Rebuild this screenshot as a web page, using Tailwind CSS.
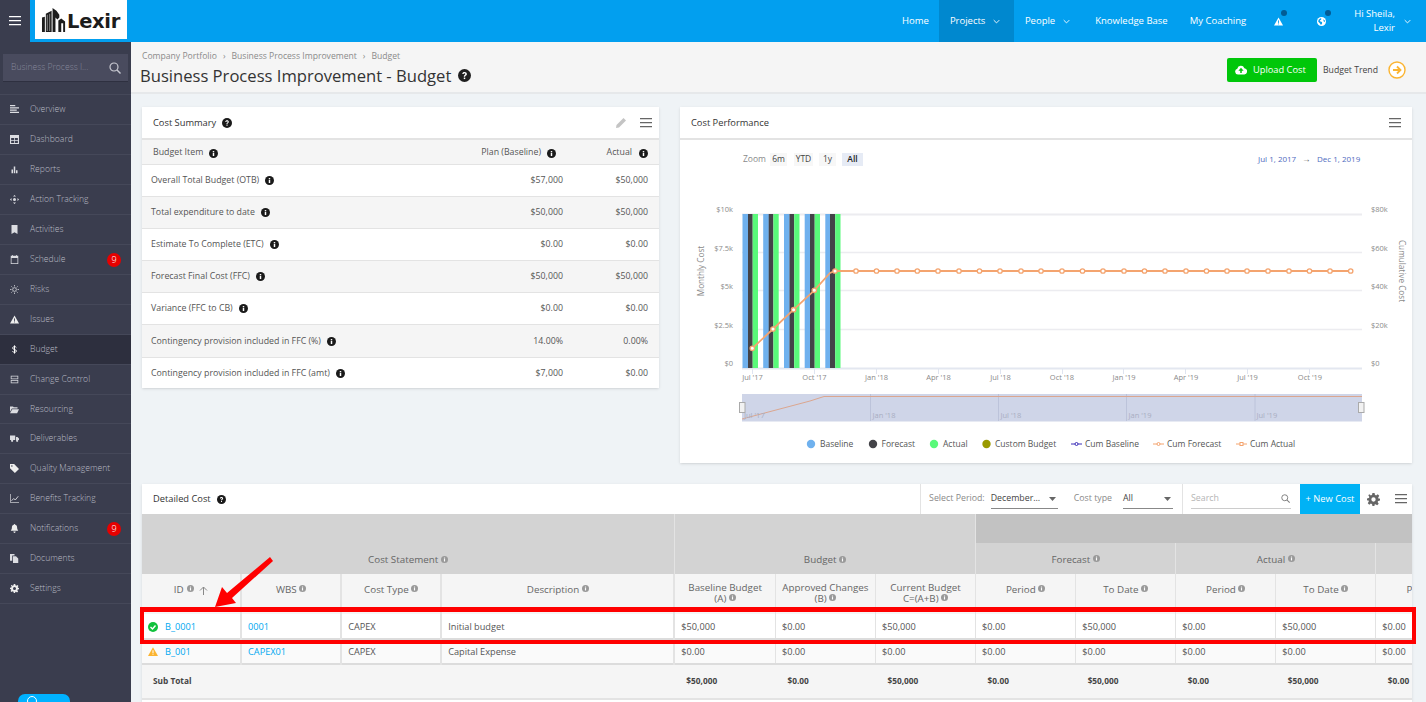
<!DOCTYPE html>
<html lang="en"><head><meta charset="utf-8"><title>Budget</title>
<script src="https://cdn.jsdelivr.net/npm/@tailwindcss/browser@4"></script></head>
<body class="relative w-[1426px] h-[702px] overflow-hidden bg-[#eff3f6] font-['Open_Sans',sans-serif] text-[#555] text-[8.800px]">
<svg class="hidden" xmlns="http://www.w3.org/2000/svg">
<symbol id="info" viewBox="0 0 16 16"><circle cx="8" cy="8" r="8" fill="currentColor"/><rect x="6.700" y="7" width="2.600" height="5.500" fill="#fff"/><rect x="6.700" y="3.600" width="2.600" height="2.300" fill="#fff"/></symbol>
<symbol id="help" viewBox="0 0 16 16"><circle cx="8" cy="8" r="8" fill="currentColor"/><path d="M5.200 6.200C5.300 4.400 6.600 3.600 8.100 3.600c1.600 0 2.800 1 2.800 2.400 0 1.200-.8 1.800-1.500 2.300-.5.4-.6.6-.6 1.200H7.100c0-1 .3-1.600 1-2.100.6-.4.9-.7.9-1.200 0-.5-.4-.9-1-.9-.7 0-1 .4-1.100 1z" fill="#fff"/><rect x="7.100" y="10.500" width="1.800" height="1.900" fill="#fff"/></symbol>
<symbol id="menu" viewBox="0 0 12 10"><path d="M0 0h12v1.300H0zM0 4h12v1.300H0zM0 8h12v1.300H0z" fill="currentColor"/></symbol>
<symbol id="chev" viewBox="0 0 10 6"><path d="M1 1l4 4 4-4" fill="none" stroke="currentColor" stroke-width="1.300"/></symbol>
<symbol id="warn" viewBox="0 0 16 14"><path d="M8 0l8 14H0z" fill="currentColor"/><rect x="7.200" y="5" width="1.600" height="4.500" fill="#fff"/><rect x="7.200" y="10.500" width="1.600" height="1.600" fill="#fff"/></symbol>
<symbol id="warnb" viewBox="0 0 16 14"><path d="M8 0l8 14H0z" fill="currentColor"/><rect x="7.200" y="5" width="1.600" height="4.500" fill="#029fef"/><rect x="7.200" y="10.500" width="1.600" height="1.600" fill="#029fef"/></symbol>
<symbol id="warnd" viewBox="0 0 16 14"><path d="M8 0l8 14H0z" fill="currentColor"/><rect x="7.200" y="5" width="1.600" height="4.500" fill="#3a3d4e"/><rect x="7.200" y="10.500" width="1.600" height="1.600" fill="#3a3d4e"/></symbol>
<symbol id="globe" viewBox="0 0 16 16"><circle cx="8" cy="8" r="8" fill="currentColor"/><path d="M3 5l3-3 2 1-1 2-2 1 1 2 3 1 0 3-2 2-2-3-3-3zM11 4l3 2 0 3-2-1z" fill="#029fef"/></symbol>
<symbol id="overview" viewBox="0 0 12 12"><path d="M0 0h7v1.500H0zM0 3h12v1.500H0zM0 6h9v1.500H0zM0 9h12v1.500H0z" fill="currentColor"/></symbol>
<symbol id="dash" viewBox="0 0 12 12"><path fill-rule="evenodd" d="M0 0h12v12H0zM1.500 4v2.500h4V4zM6.500 4v2.500h4V4zM1.500 7.500v3h4v-3zM6.500 7.500v3h4v-3z" fill="currentColor"/></symbol>
<symbol id="bars" viewBox="0 0 12 12"><path d="M2 6h2v5H2zM5 2h2v9H5zM8 7h2v4H8z" fill="currentColor"/></symbol>
<symbol id="move" viewBox="0 0 12 12"><path d="M6 0l2 2H4zM6 12l2-2H4zM0 6l2-2v4zM12 6l-2-2v4z" fill="currentColor"/><rect x="4" y="4" width="4" height="4" rx="2" fill="currentColor"/></symbol>
<symbol id="bookmark" viewBox="0 0 12 12"><path d="M2 0h8v12L6 9.500 2 12z" fill="currentColor"/></symbol>
<symbol id="cal" viewBox="0 0 12 12"><path fill-rule="evenodd" d="M1 1h2V0h1v1h4V0h1v1h2v11H1zM2 4v7h8V4z" fill="currentColor"/></symbol>
<symbol id="bulb" viewBox="0 0 12 12"><circle cx="6" cy="6" r="2.500" fill="none" stroke="currentColor"/><path d="M6 0v2M6 10v2M0 6h2M10 6h2M1.800 1.800l1.400 1.400M8.800 8.800l1.400 1.400M10.200 1.800L8.800 3.200M3.200 8.800l-1.400 1.400" stroke="currentColor"/></symbol>
<symbol id="dollar" viewBox="0 0 12 12"><path d="M8.500 3.500C8 2.500 7 2.200 6 2.200c-1.400 0-2.500.7-2.500 1.900C3.500 6.500 8.500 5.500 8.500 8c0 1.200-1.100 1.800-2.500 1.800-1.200 0-2.200-.5-2.700-1.500M6 .5v11" fill="none" stroke="currentColor" stroke-width="1.300"/></symbol>
<symbol id="server" viewBox="0 0 12 12"><path fill-rule="evenodd" d="M1 1h10v4.500H1zM1 6.500h10V11H1zM2 2v2.500h8V2zM2 7.500V10h8V7.500z" fill="currentColor"/></symbol>
<symbol id="folder" viewBox="0 0 12 10"><path d="M0 1h4l1 1h5v1.500H2.500L0 8zM3 4.500h9L9.500 10H0z" fill="currentColor"/></symbol>
<symbol id="truck" viewBox="0 0 12 10"><path d="M0 1h7v6H0zM8 3h2l2 2v2H8z" fill="currentColor"/><circle cx="2.800" cy="8" r="1.500" fill="currentColor"/><circle cx="9.500" cy="8" r="1.500" fill="currentColor"/></symbol>
<symbol id="tag" viewBox="0 0 12 12"><path fill-rule="evenodd" d="M0 0h5.500L12 6.500 6.500 12 0 5.500zM2.500 1.500a1 1 0 100 2 1 1 0 000-2z" fill="currentColor"/></symbol>
<symbol id="line" viewBox="0 0 12 12"><path d="M.5 0v11.500H12" fill="none" stroke="currentColor"/><path d="M2 9l3-3 2 2 4-5" fill="none" stroke="currentColor" stroke-width="1.200"/></symbol>
<symbol id="bell" viewBox="0 0 12 12"><path d="M6 0c.6 0 1 .4 1 1 2 .5 2.500 2 2.500 4 0 2 1 3 1.500 4H1c.5-1 1.500-2 1.500-4s.5-3.500 2.500-4c0-.6.4-1 1-1zM4.500 10h3c0 1-.7 2-1.500 2s-1.500-1-1.500-2z" fill="currentColor"/></symbol>
<symbol id="copy" viewBox="0 0 12 12"><path d="M0 0h6v2H3v7H0zM4 3h4l3 3v6H4z" fill="currentColor"/></symbol>
<symbol id="gear" viewBox="0 0 12 12"><path fill-rule="evenodd" d="M5 0h2l.3 1.700 1.100.5L9.900 1.200l1.400 1.400-1 1.500.5 1.100L12 5v2l-1.700.3-.5 1.100 1 1.500-1.400 1.400-1.500-1-1.100.5L7 12H5l-.3-1.700-1.100-.5-1.500 1L.7 9.400l1-1.500-.5-1.100L0 7V5l1.700-.3.5-1.100-1-1.500L2.100 1.200l1.500 1 1.100-.5zM6 4a2 2 0 100 4 2 2 0 000-4z" fill="currentColor"/></symbol>
<symbol id="search" viewBox="0 0 12 12"><circle cx="5" cy="5" r="4" fill="none" stroke="currentColor" stroke-width="1.200"/><path d="M8 8l3.500 3.500" stroke="currentColor" stroke-width="1.400"/></symbol>
</svg>

<header class="flex h-[42px] bg-[#029fef] text-white text-[9.500px]">
  <div class="w-[30px] bg-[#3a3d4e] flex items-center justify-center"><svg class="w-[12px] h-[10px]"><use href="#menu"/></svg></div>
  <div class="ml-[5px] w-[92px] h-[39px] bg-white flex items-center pl-[6px]">
    <svg class="w-[27px] h-[26px] shrink-0" viewBox="0 0 28 27"><path d="M1 26V11l3-1v16zM5 26V7l6-3v22zM12 26V1l4 3 3 4v3l-2 2-2-2v15zM18 26V14l3-2 4 3v11h-2V17h-2v9z" fill="#1c1c1c"/><path d="M6 8h1v17H6zM8.500 7h1v18h-1z" fill="#888"/></svg>
    <span class="font-['DejaVu_Sans',sans-serif] font-bold text-[19.500px] text-[#1c1c1c] tracking-[-0.300px] mt-[5px] -ml-[1px]">Lexir</span>
  </div>
  <nav class="ml-auto flex items-stretch">
    <a class="flex items-center mr-[10px]">Home</a>
    <a class="flex items-center w-[75px] pl-[11px] bg-[#0088cf]">Projects<svg class="w-[7px] h-[5px] ml-[8px]"><use href="#chev"/></svg></a>
    <a class="flex items-center ml-[11px] mr-[25px]">People<svg class="w-[7px] h-[5px] ml-[8px]"><use href="#chev"/></svg></a>
    <a class="flex items-center mr-[22px]">Knowledge Base</a>
    <a class="flex items-center mr-[28px]">My Coaching</a>
    <span class="relative flex items-center mr-[34px]"><svg class="w-[9px] h-[9px]"><use href="#warnb"/></svg><span class="absolute left-[7px] top-[10px] w-[6px] h-[6px] rounded-full bg-[#025c95]"></span></span>
    <span class="relative flex items-center mr-[28px]"><svg class="w-[9px] h-[9px]"><use href="#globe"/></svg><span class="absolute left-[8px] top-[10px] w-[6px] h-[6px] rounded-full bg-[#025c95]"></span></span>
    <span class="flex items-center mr-[9px] text-right leading-[14.500px] text-[9.500px]">Hi Sheila,<br>Lexir</span>
    <span class="flex items-center mr-[15px]"><svg class="w-[7px] h-[5px]"><use href="#chev"/></svg></span>
  </nav>
</header>

<div class="flex h-[660px]">
<aside class="relative w-[131px] shrink-0 bg-[#3a3d4e] text-[#b9bbc4] text-[8.600px] font-light">
  <div class="h-[53px] pt-[12px] px-[3px] border-b border-[#454859]">
    <div class="flex items-center justify-between h-[28px] bg-[#494b5e] border-b border-[#2e3040] pl-[8px] pr-[7px] text-[#85879a]"><span>Business Process I...</span><svg class="w-[12px] h-[12px] text-[#c8c9d1]"><use href="#search"/></svg></div>
  </div>
  <a class="flex items-center h-[30px] border-b border-[#454859]"><svg class="w-[9px] h-[9px] ml-[10px] mr-[11px] text-[#dcdde2]"><use href="#overview"/></svg>Overview</a>
  <a class="flex items-center h-[30px] border-b border-[#454859]"><svg class="w-[9px] h-[9px] ml-[10px] mr-[11px] text-[#dcdde2]"><use href="#dash"/></svg>Dashboard</a>
  <a class="flex items-center h-[30px] border-b border-[#454859]"><svg class="w-[9px] h-[9px] ml-[10px] mr-[11px] text-[#dcdde2]"><use href="#bars"/></svg>Reports</a>
  <a class="flex items-center h-[30px] border-b border-[#454859]"><svg class="w-[9px] h-[9px] ml-[10px] mr-[11px] text-[#dcdde2]"><use href="#move"/></svg>Action Tracking</a>
  <a class="flex items-center h-[30px] border-b border-[#454859]"><svg class="w-[9px] h-[9px] ml-[10px] mr-[11px] text-[#dcdde2]"><use href="#bookmark"/></svg>Activities</a>
  <a class="flex items-center h-[30px] border-b border-[#454859]"><svg class="w-[9px] h-[9px] ml-[10px] mr-[11px] text-[#dcdde2]"><use href="#cal"/></svg>Schedule<span class="ml-auto mr-[10px] w-[14px] h-[14px] rounded-full bg-[#e60000] text-white flex items-center justify-center text-[9px]">9</span></a>
  <a class="flex items-center h-[30px] border-b border-[#454859]"><svg class="w-[9px] h-[9px] ml-[10px] mr-[11px] text-[#dcdde2]"><use href="#bulb"/></svg>Risks</a>
  <a class="flex items-center h-[30px] border-b border-[#454859]"><svg class="w-[9px] h-[9px] ml-[10px] mr-[11px] text-[#eee]"><use href="#warnd"/></svg>Issues</a>
  <a class="flex items-center h-[30px] border-b border-[#454859] bg-[#2d2f3e]"><svg class="w-[9px] h-[9px] ml-[10px] mr-[11px] text-white"><use href="#dollar"/></svg>Budget</a>
  <a class="flex items-center h-[30px] border-b border-[#454859]"><svg class="w-[9px] h-[9px] ml-[10px] mr-[11px] text-[#dcdde2]"><use href="#server"/></svg>Change Control</a>
  <a class="flex items-center h-[29px] border-b border-[#454859]"><svg class="w-[9px] h-[9px] ml-[10px] mr-[11px] text-[#dcdde2]"><use href="#folder"/></svg>Resourcing</a>
  <a class="flex items-center h-[30px] border-b border-[#454859]"><svg class="w-[9px] h-[9px] ml-[10px] mr-[11px] text-[#dcdde2]"><use href="#truck"/></svg>Deliverables</a>
  <a class="flex items-center h-[30px] border-b border-[#454859]"><svg class="w-[9px] h-[9px] ml-[10px] mr-[11px] text-[#eee]"><use href="#tag"/></svg>Quality Management</a>
  <a class="flex items-center h-[30px] border-b border-[#454859]"><svg class="w-[9px] h-[9px] ml-[10px] mr-[11px] text-[#dcdde2]"><use href="#line"/></svg>Benefits Tracking</a>
  <a class="flex items-center h-[30px] border-b border-[#454859]"><svg class="w-[9px] h-[9px] ml-[10px] mr-[11px] text-[#eee]"><use href="#bell"/></svg>Notifications<span class="ml-auto mr-[10px] w-[14px] h-[14px] rounded-full bg-[#e60000] text-white flex items-center justify-center text-[9px]">9</span></a>
  <a class="flex items-center h-[30px] border-b border-[#454859]"><svg class="w-[9px] h-[9px] ml-[10px] mr-[11px] text-[#dcdde2]"><use href="#copy"/></svg>Documents</a>
  <a class="flex items-center h-[30px] border-b border-[#454859]"><svg class="w-[9px] h-[9px] ml-[10px] mr-[11px] text-[#eee]"><use href="#gear"/></svg>Settings</a>
  <div class="absolute left-[18px] top-[652px] w-[52px] h-[14px] rounded-t-[7px] bg-[#00b2ff]"><span class="absolute left-[9px] top-[2px] w-[10px] h-[10px] rounded-full border border-white"></span></div>
</aside>

<main class="flex-1 min-w-0">
  <div class="flex h-[52px] bg-[#f5f5f5] border-b-2 border-[#e6e8ea]">
    <div class="pl-[11px]">
      <div class="pt-[8px] leading-[13px] text-[8.600px] text-[#8a8a8a] flex gap-[6px]"><span>Company Portfolio</span><span>›</span><span>Business Process Improvement</span><span>›</span><span>Budget</span></div>
      <h1 class="flex items-center -ml-[2px] mt-[1px] text-[#333] text-[16.600px] leading-[23px]">Business Process Improvement - Budget<svg class="w-[13px] h-[13px] ml-[7px] text-[#1f1f1f]"><use href="#help"/></svg></h1>
    </div>
    <div class="ml-auto flex items-start pt-[16px] pr-[20px]">
      <a class="flex items-center h-[24px] w-[90px] pl-[8px] bg-[#00c70a] rounded-[2px] text-white text-[9.300px]"><svg class="w-[12px] h-[10px] mr-[6px]" viewBox="0 0 16 12"><path fill-rule="evenodd" d="M4 12a4 4 0 01-1-7.800A5 5 0 0112.500 3.500 4.300 4.300 0 0112.500 12zM8 3L4.500 7H7v3h2V7h2.500z" fill="#fff"/></svg>Upload Cost</a>
      <span class="ml-[6px] mt-[6px] text-[#444] text-[8.700px]">Budget Trend</span>
      <svg class="w-[18px] h-[18px] ml-[10px] mt-[3px]" viewBox="0 0 18 18"><circle cx="9" cy="9" r="8" fill="#fff" stroke="#fbb431" stroke-width="1.400"/><path d="M5 9h7M9 5.500L12.500 9 9 12.500" fill="none" stroke="#fbb431" stroke-width="1.800"/></svg>
    </div>
  </div>

  <div class="flex items-start pl-[11px] pt-[13px] gap-[21px]">
    <section class="w-[517px] h-[281px] bg-white shadow-sm">
      <div class="flex items-center h-[33px] pt-[1px] border-b-2 border-[#e3e3e3] pl-[11px] pr-[7px]">
        <span class="text-[#333] font-medium text-[9.300px]">Cost Summary</span><svg class="w-[10px] h-[10px] ml-[6px] text-[#1a1a1a]"><use href="#help"/></svg>
        <svg class="ml-auto w-[10px] h-[10px] text-[#c4c4c4]" viewBox="0 0 10 10"><path d="M7.500 0L10 2.500 3 9.500 0 10l.5-3z" fill="currentColor"/></svg>
        <svg class="ml-[14px] w-[12px] h-[10px] text-[#666]"><use href="#menu"/></svg>
      </div>
      <div class="flex items-center h-[25px] pt-[2px] bg-[#f5f5f5] border-b border-[#e3e3e3] pl-[11px]"><span class="flex-1 flex items-center">Budget Item<svg class="w-[9px] h-[9px] ml-[6px] text-[#1a1a1a]"><use href="#info"/></svg></span><span class="w-[92px] flex items-center justify-end">Plan (Baseline)<svg class="w-[9px] h-[9px] ml-[6px] text-[#1a1a1a]"><use href="#info"/></svg></span><span class="w-[92px] mr-[11px] flex items-center justify-end">Actual<svg class="w-[9px] h-[9px] ml-[7px] text-[#1a1a1a]"><use href="#info"/></svg></span></div>
      <div class="flex items-center h-[32px] border-b border-[#e3e3e3] pl-[9px] pr-[11px]"><span class="flex-1 flex items-center">Overall Total Budget (OTB)<svg class="w-[9px] h-[9px] ml-[6px] text-[#1a1a1a]"><use href="#info"/></svg></span><span class="w-[85px] text-right">$57,000</span><span class="w-[85px] text-right">$50,000</span></div>
      <div class="flex items-center h-[32px] border-b border-[#e3e3e3] pl-[9px] pr-[11px] bg-[#f5f5f5]"><span class="flex-1 flex items-center">Total expenditure to date<svg class="w-[9px] h-[9px] ml-[6px] text-[#1a1a1a]"><use href="#info"/></svg></span><span class="w-[85px] text-right">$50,000</span><span class="w-[85px] text-right">$50,000</span></div>
      <div class="flex items-center h-[32px] border-b border-[#e3e3e3] pl-[9px] pr-[11px]"><span class="flex-1 flex items-center">Estimate To Complete (ETC)<svg class="w-[9px] h-[9px] ml-[6px] text-[#1a1a1a]"><use href="#info"/></svg></span><span class="w-[85px] text-right">$0.00</span><span class="w-[85px] text-right">$0.00</span></div>
      <div class="flex items-center h-[32px] border-b border-[#e3e3e3] pl-[9px] pr-[11px] bg-[#f5f5f5]"><span class="flex-1 flex items-center">Forecast Final Cost (FFC)<svg class="w-[9px] h-[9px] ml-[6px] text-[#1a1a1a]"><use href="#info"/></svg></span><span class="w-[85px] text-right">$50,000</span><span class="w-[85px] text-right">$50,000</span></div>
      <div class="flex items-center h-[32px] border-b border-[#e3e3e3] pl-[9px] pr-[11px]"><span class="flex-1 flex items-center">Variance (FFC to CB)<svg class="w-[9px] h-[9px] ml-[6px] text-[#1a1a1a]"><use href="#info"/></svg></span><span class="w-[85px] text-right">$0.00</span><span class="w-[85px] text-right">$0.00</span></div>
      <div class="flex items-center h-[33px] pt-[1px] border-b border-[#e3e3e3] pl-[9px] pr-[11px] bg-[#f5f5f5]"><span class="flex-1 flex items-center">Contingency provision included in FFC (%)<svg class="w-[9px] h-[9px] ml-[6px] text-[#1a1a1a]"><use href="#info"/></svg></span><span class="w-[85px] text-right">14.00%</span><span class="w-[85px] text-right">0.00%</span></div>
      <div class="flex items-center h-[31px] pl-[9px] pr-[11px]"><span class="flex-1 flex items-center">Contingency provision included in FFC (amt)<svg class="w-[9px] h-[9px] ml-[6px] text-[#1a1a1a]"><use href="#info"/></svg></span><span class="w-[85px] text-right">$7,000</span><span class="w-[85px] text-right">$0.00</span></div>
    </section>

    <section class="w-[732px] h-[356px] bg-white shadow-sm">
      <div class="flex items-center h-[33px] pt-[1px] border-b-2 border-[#e3e3e3] pl-[11px] pr-[11px]"><span class="text-[#333] font-medium text-[9.300px]">Cost Performance</span><svg class="ml-auto w-[12px] h-[10px] text-[#666]"><use href="#menu"/></svg></div>
      <svg class="block" width="732" height="323" viewBox="680 140 732 323" font-family="Open Sans" font-size="8.500" fill="#8a8a8a">
        <text x="743" y="162" font-size="8.500">Zoom</text>
        <rect x="770" y="153" width="17" height="13" fill="#f7f7f7"/><text x="778.500" y="162" text-anchor="middle" fill="#444">6m</text>
        <rect x="794" y="153" width="19" height="13" fill="#f7f7f7"/><text x="803.500" y="162" text-anchor="middle" fill="#444">YTD</text>
        <rect x="819" y="153" width="17" height="13" fill="#f7f7f7"/><text x="827.500" y="162" text-anchor="middle" fill="#444">1y</text>
        <rect x="842" y="153" width="21" height="13" fill="#e6ebf5"/><text x="852.500" y="162" text-anchor="middle" fill="#222" font-weight="600">All</text>
        <text x="1258" y="162" fill="#4f6bc0" font-size="8">Jul 1, 2017</text><text x="1302" y="162" fill="#666">→</text><text x="1317" y="162" fill="#4f6bc0" font-size="8">Dec 1, 2019</text>
        <g stroke="#ececf0" stroke-width="1.400"><path d="M742 214.500H1362" stroke-width="2"/><path d="M742 252.500H1362"/><path d="M742 290.500H1362"/><path d="M742 329.500H1362"/></g>
        <path d="M742 368.500H1362" stroke="#e3e7f0" stroke-width="2"/>
        <g stroke="#dfe4f0"><path d="M752.500 369v5M814.500 369v5M876.500 369v5M938.500 369v5M1000.500 369v5M1062.500 369v5M1123.500 369v5M1185.500 369v5M1247.500 369v5M1309.500 369v5"/></g>
        <g fill="#6fb1ee"><rect x="742.500" y="214" width="5.700" height="154"/><rect x="763.200" y="214" width="5.700" height="154"/><rect x="784" y="214" width="5.700" height="154"/><rect x="804.700" y="214" width="5.700" height="154"/><rect x="825.300" y="214" width="5.700" height="154"/></g>
        <g fill="#434348"><rect x="748" y="214" width="4.700" height="154"/><rect x="768.700" y="214" width="4.700" height="154"/><rect x="789.500" y="214" width="4.700" height="154"/><rect x="810" y="214" width="4.700" height="154"/><rect x="830" y="214" width="5.200" height="154"/></g>
        <g fill="#59f97a"><rect x="752.700" y="214" width="5.300" height="154"/><rect x="773.400" y="214" width="5.300" height="154"/><rect x="794.200" y="214" width="5.300" height="154"/><rect x="814.700" y="214" width="5.300" height="154"/><rect x="835.200" y="214" width="5.300" height="154"/></g>
        <polyline fill="none" stroke="#f4a46f" stroke-width="1.800" points="752.300,348.300 773,329 793.600,309.700 814.300,290.300 830,273 835,271 1350.700,271"/>
        <g fill="#fff" stroke="#f4a46f" stroke-width="1.300">
          <circle cx="752.300" cy="348.300" r="2.200"/><circle cx="773" cy="329" r="2.200"/><circle cx="793.600" cy="309.700" r="2.200"/><circle cx="814.300" cy="290.300" r="2.200"/><circle cx="835" cy="271" r="2.200"/><circle cx="856" cy="271" r="2.200"/><circle cx="876.500" cy="271" r="2.200"/><circle cx="897" cy="271" r="2.200"/><circle cx="917.300" cy="271" r="2.200"/><circle cx="938" cy="271" r="2.200"/><circle cx="959" cy="271" r="2.200"/><circle cx="979.500" cy="271" r="2.200"/><circle cx="1000" cy="271" r="2.200"/><circle cx="1021" cy="271" r="2.200"/><circle cx="1041" cy="271" r="2.200"/><circle cx="1062" cy="271" r="2.200"/><circle cx="1082.500" cy="271" r="2.200"/><circle cx="1103" cy="271" r="2.200"/><circle cx="1124" cy="271" r="2.200"/><circle cx="1144.500" cy="271" r="2.200"/><circle cx="1165" cy="271" r="2.200"/><circle cx="1186" cy="271" r="2.200"/><circle cx="1206.500" cy="271" r="2.200"/><circle cx="1227" cy="271" r="2.200"/><circle cx="1247" cy="271" r="2.200"/><circle cx="1268" cy="271" r="2.200"/><circle cx="1289" cy="271" r="2.200"/><circle cx="1309.500" cy="271" r="2.200"/><circle cx="1330" cy="271" r="2.200"/><circle cx="1350.700" cy="271" r="2.200"/>
        </g>
        <g font-size="7.500" text-anchor="end"><text x="733" y="212">$10k</text><text x="733" y="251">$7.5k</text><text x="733" y="289">$5k</text><text x="733" y="328">$2.5k</text><text x="733" y="366">$0</text></g>
        <g font-size="7.500"><text x="1371" y="212">$80k</text><text x="1371" y="251">$60k</text><text x="1371" y="289">$40k</text><text x="1371" y="328">$20k</text><text x="1371" y="366">$0</text></g>
        <g font-size="7.500" text-anchor="middle"><text x="752.500" y="380">Jul '17</text><text x="814.500" y="380">Oct '17</text><text x="876.500" y="380">Jan '18</text><text x="938.500" y="380">Apr '18</text><text x="1000.500" y="380">Jul '18</text><text x="1062" y="380">Oct '18</text><text x="1124" y="380">Jan '19</text><text x="1186" y="380">Apr '19</text><text x="1247.500" y="380">Jul '19</text><text x="1310" y="380">Oct '19</text></g>
        <text transform="translate(704 271) rotate(-90)" text-anchor="middle" font-size="8.200">Monthly Cost</text>
        <text transform="translate(1399 271) rotate(90)" text-anchor="middle" font-size="8.200">Cumulative Cost</text>
        <rect x="742" y="394" width="620" height="27.500" fill="#cfd5e8"/>
        <path d="M870.500 394v27M998.500 394v27M1126.500 394v27M1255 394v27" stroke="#bcc3da"/>
        <polyline fill="none" stroke="#dba68f" stroke-width="1" points="742,419 810,401 824,396.500 1362,396.500"/>
        <g font-size="7.500" fill="#a9aec2"><text x="744" y="418">Jul '17</text><text x="872.500" y="418">Jan '18</text><text x="1000.500" y="418">Jul '18</text><text x="1128.500" y="418">Jan '19</text><text x="1256.500" y="418">Jul '19</text></g>
        <g fill="#f2f2f2" stroke="#aaa" stroke-width="1"><rect x="739.500" y="402.500" width="5.500" height="10"/><rect x="1358.500" y="402.500" width="5.500" height="10"/></g>
        <g font-size="8.500" fill="#555"><circle cx="811" cy="444" r="4.200" fill="#6fb1ee"/><text x="820" y="447">Baseline</text><circle cx="873" cy="444" r="4.200" fill="#434348"/><text x="881.500" y="447">Forecast</text><circle cx="934" cy="444" r="4.200" fill="#59f97a"/><text x="943" y="447">Actual</text><circle cx="986.500" cy="444" r="4.200" fill="#9a9a00"/><text x="995" y="447">Custom Budget</text></g>
        <g font-size="8.500" fill="#555"><path d="M1071 444h11" stroke="#3c2fb8"/><circle cx="1076.500" cy="444" r="1.500" fill="#fff" stroke="#3c2fb8"/><text x="1085" y="447">Cum Baseline</text><path d="M1153 444h11" stroke="#f4a46f"/><circle cx="1158.500" cy="444" r="1.500" fill="#fff" stroke="#f4a46f"/><text x="1167" y="447">Cum Forecast</text><path d="M1236 444h11" stroke="#f4a46f"/><rect x="1240" y="442.500" width="3" height="3" fill="#fff" stroke="#f4a46f"/><text x="1250" y="447">Cum Actual</text></g>
      </svg>
    </section>
  </div>

  <section class="ml-[11px] mt-[21px] w-[1270px] h-[218px] bg-white overflow-hidden shadow-sm">
    <div class="flex items-center h-[30px] pl-[11px]">
      <span class="text-[#333] font-medium text-[9.300px] -mt-[1px]">Detailed Cost</span><svg class="w-[9px] h-[9px] ml-[6px] text-[#1a1a1a]"><use href="#help"/></svg>
      <div class="ml-auto flex items-center h-full border-l border-[#e3e3e3] pl-[8px] text-[#8a8a8a]">
        <span>Select Period:</span>
        <span class="flex items-center justify-between w-[67px] h-[19px] ml-[6px] border-b border-[#888] text-[#444]">December...<svg class="w-[7px] h-[4px] mr-[2px]" viewBox="0 0 7 4"><path d="M0 0h7L3.500 4z" fill="#666"/></svg></span>
        <span class="ml-[16px]">Cost type</span>
        <span class="flex items-center justify-between w-[50px] h-[19px] ml-[11px] border-b border-[#888] text-[#444]">All<svg class="w-[7px] h-[4px] mr-[2px]" viewBox="0 0 7 4"><path d="M0 0h7L3.500 4z" fill="#666"/></svg></span>
      </div>
      <div class="flex items-center h-full ml-[9px] border-l border-[#e3e3e3] pl-[8px]"><span class="flex items-center justify-between w-[100px] h-[19px] border-b border-[#ccc] text-[#b5b5b5]">Search<svg class="w-[9px] h-[9px] mr-[1px] text-[#777]"><use href="#search"/></svg></span></div>
      <a class="flex items-center justify-center ml-[9px] w-[60px] h-full bg-[#00b2f5] text-white text-[9.300px]">+ New Cost</a>
      <svg class="ml-[7px] w-[13px] h-[13px] text-[#666]"><use href="#gear"/></svg>
      <svg class="ml-[15px] mr-[5px] w-[12px] h-[10px] text-[#666]"><use href="#menu"/></svg>
    </div>
    <table class="table-fixed w-[1334px] border-collapse text-[9.200px] text-[#555]">
      <colgroup><col class="w-[99px]"><col class="w-[100px]"><col class="w-[100px]"><col class="w-[233px]"><col class="w-[101px]"><col class="w-[100px]"><col class="w-[100px]"><col class="w-[100px]"><col class="w-[100px]"><col class="w-[100px]"><col class="w-[100px]"><col class="w-[100px]"></colgroup>
      <thead class="text-[9.800px]">
        <tr class="h-[29px]">
          <th rowspan="2" colspan="4" class="bg-[#d3d3d3] align-bottom pb-[6px] font-normal text-[#666] border-r border-[#e3e3e3]">Cost Statement <svg class="inline w-[7px] h-[7px] -mt-[3px] text-[#999]"><use href="#info"/></svg></th>
          <th rowspan="2" colspan="3" class="bg-[#d3d3d3] align-bottom pb-[6px] font-normal text-[#666] border-r border-[#e3e3e3]">Budget <svg class="inline w-[7px] h-[7px] -mt-[3px] text-[#999]"><use href="#info"/></svg></th>
          <th colspan="5" class="bg-[#c2c2c2]"></th>
        </tr>
        <tr class="h-[31px]">
          <th colspan="2" class="bg-[#d3d3d3] pt-[3px] font-normal text-[#666] border-r border-[#e3e3e3]">Forecast <svg class="inline w-[7px] h-[7px] -mt-[3px] text-[#999]"><use href="#info"/></svg></th>
          <th colspan="2" class="bg-[#d3d3d3] pt-[3px] font-normal text-[#666] border-r border-[#e3e3e3]">Actual <svg class="inline w-[7px] h-[7px] -mt-[3px] text-[#999]"><use href="#info"/></svg></th>
          <th class="bg-[#d3d3d3]"></th>
        </tr>
        <tr class="h-[40px] bg-[#f5f5f5] text-[#666] text-center leading-[11px]">
          <th class="font-normal border-r-2 border-[#e3e3e3] pb-[9px]">ID <svg class="inline w-[7px] h-[7px] -mt-[3px] ml-[1px] text-[#999]"><use href="#info"/></svg><svg class="inline w-[9px] h-[9px] ml-[5px] -mb-[1px] text-[#888]" viewBox="0 0 9 9"><path d="M4.500 9V1M1 4.500L4.500 1 8 4.500" fill="none" stroke="currentColor"/></svg></th>
          <th class="font-normal border-r-2 border-[#e3e3e3] pb-[9px]">WBS <svg class="inline w-[7px] h-[7px] -mt-[3px] text-[#999]"><use href="#info"/></svg></th>
          <th class="font-normal border-r-2 border-[#e3e3e3] pb-[9px]">Cost Type <svg class="inline w-[7px] h-[7px] -mt-[3px] text-[#999]"><use href="#info"/></svg></th>
          <th class="font-normal border-r-2 border-[#e3e3e3] pb-[9px]">Description <svg class="inline w-[7px] h-[7px] -mt-[3px] text-[#999]"><use href="#info"/></svg></th>
          <th class="font-normal border-r border-[#e3e3e3] pb-[2px]">Baseline Budget<br>(A) <svg class="inline w-[7px] h-[7px] -mt-[3px] text-[#999]"><use href="#info"/></svg></th>
          <th class="font-normal border-r border-[#e3e3e3] pb-[2px]">Approved Changes<br>(B) <svg class="inline w-[7px] h-[7px] -mt-[3px] text-[#999]"><use href="#info"/></svg></th>
          <th class="font-normal border-r border-[#e3e3e3] pb-[2px]">Current Budget<br>C=(A+B) <svg class="inline w-[7px] h-[7px] -mt-[3px] text-[#999]"><use href="#info"/></svg></th>
          <th class="font-normal border-r border-[#e3e3e3] pb-[9px]">Period <svg class="inline w-[7px] h-[7px] -mt-[3px] text-[#999]"><use href="#info"/></svg></th>
          <th class="font-normal border-r border-[#e3e3e3] pb-[9px]">To Date <svg class="inline w-[7px] h-[7px] -mt-[3px] text-[#999]"><use href="#info"/></svg></th>
          <th class="font-normal border-r border-[#e3e3e3] pb-[9px]">Period <svg class="inline w-[7px] h-[7px] -mt-[3px] text-[#999]"><use href="#info"/></svg></th>
          <th class="font-normal border-r border-[#e3e3e3] pb-[9px]">To Date <svg class="inline w-[7px] h-[7px] -mt-[3px] text-[#999]"><use href="#info"/></svg></th>
          <th class="font-normal pb-[9px]">Period <svg class="inline w-[7px] h-[7px] -mt-[3px] text-[#999]"><use href="#info"/></svg></th>
        </tr>
      </thead>
      <tbody>
        <tr class="h-[25px] border-b-2 border-[#dcdcdc]">
          <td class="border-r-2 border-[#e3e3e3] pl-[6px] pt-[2px]"><span class="flex items-center text-[#00a8f0]"><svg class="w-[10px] h-[10px] mr-[7px]" viewBox="0 0 10 10"><circle cx="5" cy="5" r="5" fill="#10c13c"/><path d="M2.500 5l2 2 3-3.500" fill="none" stroke="#fff" stroke-width="1.400"/></svg>B_0001</span></td>
          <td class="border-r-2 border-[#e3e3e3] pl-[6px] pt-[2px] text-[#00a8f0]">0001</td><td class="border-r-2 border-[#e3e3e3] pl-[6px] pt-[2px]">CAPEX</td><td class="border-r-2 border-[#e3e3e3] pl-[6px] pt-[2px]">Initial budget</td>
          <td class="border-r border-[#e3e3e3] pl-[6px] pt-[2px]">$50,000</td><td class="border-r border-[#e3e3e3] pl-[6px] pt-[2px]">$0.00</td><td class="border-r border-[#e3e3e3] pl-[6px] pt-[2px]">$50,000</td><td class="border-r border-[#e3e3e3] pl-[6px] pt-[2px]">$0.00</td><td class="border-r border-[#e3e3e3] pl-[6px] pt-[2px]">$50,000</td><td class="border-r border-[#e3e3e3] pl-[6px] pt-[2px]">$0.00</td><td class="border-r border-[#e3e3e3] pl-[6px] pt-[2px]">$50,000</td><td class="pl-[6px] pt-[2px]">$0.00</td>
        </tr>
        <tr class="h-[25px] border-b-2 border-[#dcdcdc] bg-[#fafafa]">
          <td class="border-r-2 border-[#e3e3e3] pl-[6px]"><span class="flex items-center text-[#00a8f0]"><svg class="w-[10px] h-[9px] mr-[7px] text-[#fbb431]"><use href="#warn"/></svg>B_001</span></td>
          <td class="border-r-2 border-[#e3e3e3] pl-[6px] text-[#00a8f0]">CAPEX01</td><td class="border-r-2 border-[#e3e3e3] pl-[6px]">CAPEX</td><td class="border-r-2 border-[#e3e3e3] pl-[6px]">Capital Expense</td>
          <td class="border-r border-[#e3e3e3] pl-[6px]">$0.00</td><td class="border-r border-[#e3e3e3] pl-[6px]">$0.00</td><td class="border-r border-[#e3e3e3] pl-[6px]">$0.00</td><td class="border-r border-[#e3e3e3] pl-[6px]">$0.00</td><td class="border-r border-[#e3e3e3] pl-[6px]">$0.00</td><td class="border-r border-[#e3e3e3] pl-[6px]">$0.00</td><td class="border-r border-[#e3e3e3] pl-[6px]">$0.00</td><td class="pl-[6px]">$0.00</td>
        </tr>
        <tr class="h-[35px] bg-[#f5f5f5] border-b-2 border-[#e3e3e3] font-bold text-[8.300px] text-[#444]">
          <td colspan="4" class="pl-[11px]">Sub Total</td>
          <td class="pl-[12px]">$50,000</td><td class="pl-[12px]">$0.00</td><td class="pl-[12px]">$50,000</td><td class="pl-[12px]">$0.00</td><td class="pl-[12px]">$50,000</td><td class="pl-[12px]">$0.00</td><td class="pl-[12px]">$50,000</td><td class="pl-[12px]">$0.00</td>
        </tr>
      </tbody>
    </table>
  </section>
</main>
</div>
<div class="absolute left-[140px] top-[607px] w-[1276px] h-[37px] border-4 border-t-[5px] border-[#f00] pointer-events-none"></div>
<svg class="absolute left-[210px] top-[555px] pointer-events-none" width="65" height="55" viewBox="0 0 65 55"><path d="M60 2L63 6 22 43 26 48 5 52 12 32 17 38z" fill="#f00"/></svg>
</body></html>
